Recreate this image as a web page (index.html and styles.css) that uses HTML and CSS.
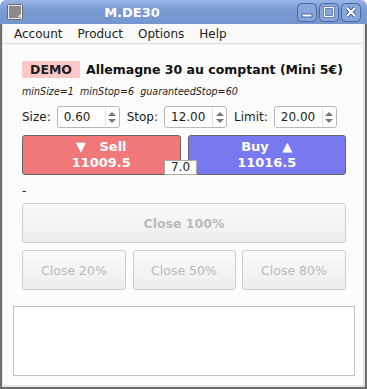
FILE: index.html
```html
<!DOCTYPE html>
<html lang="en">
<head>
    <meta charset="UTF-8">
    <title>M.DE30</title>
    <link rel="stylesheet" href="styles.css">
</head>
<body>
    <div class="window">
        <!-- Barre de titre -->
        <div class="titlebar">
            <svg class="app-icon" width="16" height="16" viewBox="0 0 16 16">
                <rect x="0.5" y="0.5" width="15" height="15" rx="1" fill="#e8e8e8" stroke="#6b6b6b"/>
                <rect x="2" y="2" width="12" height="12" fill="#8a8a8a"/>
                <path d="M11 13 L14 13 L14 10 Z" fill="#fff"/>
            </svg>
            <div class="title">M.DE30</div>
            <div class="win-buttons">
                <svg width="20" height="19" viewBox="0 0 20 19">
                    <rect x="0.5" y="0.5" width="19" height="18" rx="4" fill="#88a6da" stroke="#4866a0"/>
                    <rect x="5" y="11" width="10" height="3" fill="#fff" stroke="#4866a0" stroke-width="1"/>
                </svg>
                <svg width="20" height="19" viewBox="0 0 20 19">
                    <rect x="0.5" y="0.5" width="19" height="18" rx="4" fill="#88a6da" stroke="#4866a0"/>
                    <rect x="5.5" y="4.5" width="9" height="9" fill="none" stroke="#4866a0" stroke-width="3"/>
                    <rect x="5.5" y="4.5" width="9" height="9" fill="none" stroke="#fff" stroke-width="1.4"/>
                </svg>
                <svg width="20" height="19" viewBox="0 0 20 19">
                    <rect x="0.5" y="0.5" width="19" height="18" rx="4" fill="#88a6da" stroke="#4866a0"/>
                    <path d="M6 5 L14 13 M14 5 L6 13" stroke="#4866a0" stroke-width="4"/>
                    <path d="M6 5 L14 13 M14 5 L6 13" stroke="#fff" stroke-width="2"/>
                </svg>
            </div>
        </div>

        <div class="client">
            <div class="inner">
                <div class="menubar">
                    <span>Account</span>
                    <span>Product</span>
                    <span>Options</span>
                    <span>Help</span>
                </div>

                <div class="content">
                    <div class="header">
                        <span class="demo">DEMO</span>
                        <span class="product-name">Allemagne 30 au comptant (Mini 5€)</span>
                    </div>
                    <div class="info">minSize=1&nbsp; minStop=6&nbsp; guaranteedStop=60</div>

                    <div class="params">
                        <label>Size:</label>
                        <div class="spin">
                            <span class="spin-value">0.60</span>
                            <span class="spin-arrows"><i class="up"></i><i class="down"></i></span>
                        </div>
                        <label>Stop:</label>
                        <div class="spin">
                            <span class="spin-value">12.00</span>
                            <span class="spin-arrows"><i class="up"></i><i class="down"></i></span>
                        </div>
                        <label>Limit:</label>
                        <div class="spin">
                            <span class="spin-value">20.00</span>
                            <span class="spin-arrows"><i class="up"></i><i class="down"></i></span>
                        </div>
                    </div>

                    <div class="trade">
                        <div class="trade-btn sell">
                            <span>▼&nbsp;&nbsp; Sell</span>
                            <span>11009.5</span>
                        </div>
                        <div class="trade-btn buy">
                            <span>Buy&nbsp;&nbsp; ▲</span>
                            <span>11016.5</span>
                        </div>
                        <div class="spread">7.0</div>
                    </div>

                    <div class="status">-</div>

                    <div class="close-btn close-all">Close 100%</div>
                    <div class="close-row">
                        <div class="close-btn">Close 20%</div>
                        <div class="close-btn">Close 50%</div>
                        <div class="close-btn">Close 80%</div>
                    </div>
                </div>

                <div class="log"></div>
            </div>
        </div>
    </div>
</body>
</html>
```

FILE: styles.css
```css
body {
    margin: 0;
    background: #ffffff;
    font-family: "DejaVu Sans", sans-serif;
    color: #1e1e1e;
}
.window {
    width: 367px;
    height: 389px;
    display: flex;
    flex-direction: column;
}
.titlebar {
    height: 24px;
    display: flex;
    align-items: center;
    background: linear-gradient(#9ab5e3, #7a9bd4 40%, #7495d0);
    border-radius: 6px 6px 0 0;
    padding: 0 6px 0 7px;
}
.app-icon {
    flex: none;
}
.title {
    flex: 1;
    text-align: center;
    color: #fff;
    font-weight: bold;
    font-size: 13px;
    padding-right: 56px;
}
.win-buttons {
    display: flex;
    gap: 2px;
}
.client {
    flex: 1;
    display: flex;
    border: 2px solid #6e6e6e;
    border-top: none;
    background: #e4e4e4;
    padding: 0 2px 2px 1px;
}
.inner {
    flex: 1;
    background: #fcfcfc;
    display: flex;
    flex-direction: column;
}
.menubar {
    height: 19px;
    display: flex;
    align-items: center;
    gap: 15px;
    padding-left: 11px;
    font-size: 12px;
    color: #222;
    border-bottom: 1px solid #dcdcdc;
    background: #fafafa;
}
.content {
    padding: 17px 17px 0 19px;
}
.header {
    display: flex;
    align-items: center;
    height: 17px;
    gap: 6px;
}
.demo {
    background: #ffc8c8;
    font-weight: bold;
    font-size: 12.5px;
    height: 17px;
    line-height: 17px;
    padding: 0 8px;
}
.product-name {
    font-weight: bold;
    font-size: 12.5px;
    color: #111;
}
.info {
    font-style: italic;
    font-size: 9.6px;
    margin-top: 7px;
    height: 13px;
    line-height: 13px;
}
.params {
    display: flex;
    align-items: center;
    margin-top: 8px;
    font-size: 12px;
}
.params label {
    margin-right: 6px;
}
.spin {
    width: 63px;
    height: 22px;
    box-sizing: border-box;
    border: 1px solid #b8b8b8;
    border-radius: 3px;
    background: #fff;
    display: flex;
    align-items: center;
    margin-right: 7px;
}
.spin:last-child {
    margin-right: 0;
}
.spin-value {
    flex: 1;
    padding-left: 6px;
    font-size: 12px;
}
.spin-arrows {
    width: 13px;
    height: 18px;
    border-left: 1px solid #e0e0e0;
    display: flex;
    flex-direction: column;
    align-items: center;
    justify-content: center;
    gap: 3px;
}
.spin-arrows i {
    width: 0;
    height: 0;
    border-left: 4px solid transparent;
    border-right: 4px solid transparent;
}
.spin-arrows .up {
    border-bottom: 4px solid #777;
}
.spin-arrows .down {
    border-top: 4px solid #777;
}
.trade {
    position: relative;
    display: grid;
    grid-template-columns: 1fr 1fr;
    gap: 7px;
    margin-top: 7px;
}
.trade-btn {
    height: 40px;
    box-sizing: border-box;
    border: 1px solid #666;
    border-radius: 3px;
    display: flex;
    flex-direction: column;
    align-items: center;
    justify-content: center;
    color: #fff;
    font-weight: bold;
    font-size: 13px;
    line-height: 16px;
}
.sell {
    background: #f07878;
}
.buy {
    background: #7878f0;
}
.spread {
    position: absolute;
    left: 142px;
    bottom: 0;
    width: 33px;
    height: 15px;
    box-sizing: border-box;
    background: #fff;
    border: 1px solid #a8a8a8;
    font-size: 12px;
    line-height: 13px;
    text-align: center;
    color: #222;
}
.status {
    font-size: 12px;
    height: 28px;
    line-height: 32px;
}
.close-btn {
    height: 40px;
    box-sizing: border-box;
    border: 1px solid #cdcdcd;
    border-radius: 3px;
    background: linear-gradient(#fbfbfb, #ededed);
    color: #bababa;
    font-size: 12.5px;
    display: flex;
    align-items: center;
    justify-content: center;
}
.close-all {
    font-weight: bold;
}
.close-row {
    display: grid;
    grid-template-columns: 104px 103px 104px;
    justify-content: space-between;
    margin-top: 7px;
}
.log {
    height: 70px;
    box-sizing: border-box;
    margin: 16px 8px 0 10px;
    border: 1px solid #c0c0c0;
    background: #fff;
}
```
